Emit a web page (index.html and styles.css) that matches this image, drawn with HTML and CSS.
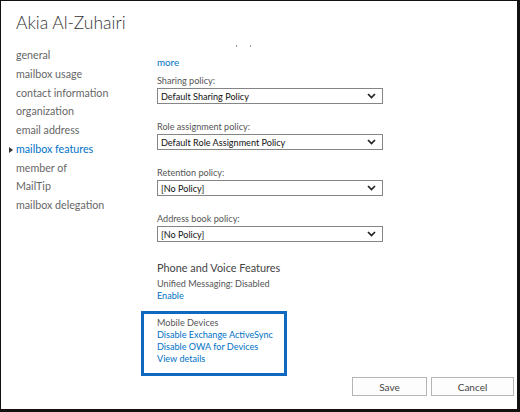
FILE: index.html
```html
<!DOCTYPE html>
<html>
<head>
<meta charset="utf-8">
<link rel="stylesheet" href="styles.css">
</head>
<body>
<div class="dialog">
  <div class="title">Akia Al-Zuhairi</div>
  <div class="main">
    <ul class="nav">
      <li>general</li>
      <li>mailbox usage</li>
      <li>contact information</li>
      <li>organization</li>
      <li>email address</li>
      <li class="active">mailbox features</li>
      <li>member of</li>
      <li>MailTip</li>
      <li>mailbox delegation</li>
    </ul>
    <div class="content">
      <div class="clipped"><span class="dot"></span><span class="dot"></span></div>
      <a class="link more">more</a>
      <div class="field">
        <div class="label">Sharing policy:</div>
        <div class="select"><span>Default Sharing Policy</span><svg class="chev" width="9" height="6" viewBox="0 0 9 6"><path d="M1 1 L4.5 4.5 L8 1" fill="none" stroke="#222" stroke-width="1.7"/></svg></div>
      </div>
      <div class="field">
        <div class="label">Role assignment policy:</div>
        <div class="select"><span>Default Role Assignment Policy</span><svg class="chev" width="9" height="6" viewBox="0 0 9 6"><path d="M1 1 L4.5 4.5 L8 1" fill="none" stroke="#222" stroke-width="1.7"/></svg></div>
      </div>
      <div class="field">
        <div class="label">Retention policy:</div>
        <div class="select"><span>[No Policy]</span><svg class="chev" width="9" height="6" viewBox="0 0 9 6"><path d="M1 1 L4.5 4.5 L8 1" fill="none" stroke="#222" stroke-width="1.7"/></svg></div>
      </div>
      <div class="field">
        <div class="label">Address book policy:</div>
        <div class="select"><span>[No Policy]</span><svg class="chev" width="9" height="6" viewBox="0 0 9 6"><path d="M1 1 L4.5 4.5 L8 1" fill="none" stroke="#222" stroke-width="1.7"/></svg></div>
      </div>
      <div class="section-title">Phone and Voice Features</div>
      <div class="text">Unified Messaging: Disabled</div>
      <a class="link">Enable</a>
      <div class="highlight">
        <div class="text">Mobile Devices</div>
        <a class="link">Disable Exchange ActiveSync</a>
        <a class="link">Disable OWA for Devices</a>
        <a class="link">View details</a>
      </div>
    </div>
  </div>
  <div class="footer">
    <button class="btn save">Save</button>
    <button class="btn cancel">Cancel</button>
  </div>
</div>
</body>
</html>
```
FILE: styles.css
```css
* { box-sizing: border-box; }
html, body { margin: 0; padding: 0; background: #fff; }
body {
  font-family: "Lato", "Open Sans", sans-serif;
  width: 520px;
  height: 412px;
  overflow: hidden;
}
.dialog {
  width: 520px;
  height: 412px;
  border-top: 1px solid #111;
  border-left: 1px solid #111;
  border-right: 3px solid #111;
  border-bottom: 3px solid #111;
  display: flex;
  flex-direction: column;
  background: #fff;
}
.title {
  flex-shrink: 0;
  font-size: 17.5px;
  font-weight: 300;
  color: #333;
  padding: 11px 0 0 15px;
  height: 44px;
  line-height: 22px;
}
.main {
  display: flex;
  flex: 1;
  min-height: 0;
  overflow: hidden;
}
.nav {
  list-style: none;
  margin: 0;
  padding: 1px 0 0 15px;
  width: 140px;
  font-size: 10.7px;
  color: #666;
}
.nav li {
  height: 18.75px;
  line-height: 18.75px;
  position: relative;
  white-space: nowrap;
}
.nav li.active {
  color: #0072c6;
}
.nav li.active::before {
  content: "";
  position: absolute;
  left: -7px;
  top: 7px;
  border-left: 4px solid #333;
  border-top: 3px solid transparent;
  border-bottom: 3px solid transparent;
}
.content {
  flex: 1;
  padding-left: 16px;
  font-size: 9.1px;
  color: #444;
  display: flex;
  flex-direction: column;
  align-items: flex-start;
}
.clipped {
  height: 11px;
  display: flex;
  gap: 13px;
  padding-left: 79px;
  align-items: flex-start;
}
.dot {
  width: 1px;
  height: 2px;
  background: #999;
}
.link {
  color: #0072c6;
  line-height: 12px;
  display: block;
  white-space: nowrap;
}
.more { font-size: 9.8px; }
.field {
  margin-bottom: 16px;
}
.more + .field { margin-top: 6px; }
.label {
  line-height: 13px;
  height: 13px;
  color: #555;
}
.select {
  width: 226px;
  height: 16px;
  border: 1px solid #858585;
  margin-top: 1px;
  display: flex;
  align-items: center;
  justify-content: space-between;
  padding: 0 6px 0 3px;
  color: #111;
}
.chev { display: block; }
.section-title {
  font-size: 10.9px;
  color: #444;
  margin-top: 2px;
  line-height: 16px;
}
.text {
  line-height: 12px;
  color: #555;
  white-space: nowrap;
}
.section-title + .text { margin-top: 2px; }
.highlight {
  margin-left: -16px;
  margin-top: 9px;
  width: 146px;
  height: 65px;
  border: 3px solid #1168c0;
  padding: 3px 0 0 13px;
  flex-shrink: 0;
}
.footer {
  flex-shrink: 0;
  display: flex;
  justify-content: flex-end;
  gap: 4px;
  padding: 0 3px 13px 0;
}
.btn {
  font-family: "Lato", "Open Sans", sans-serif;
  font-size: 10px;
  color: #444;
  background: #fdfdfd;
  border: 1px solid #b5b5b5;
  height: 19px;
  padding: 0;
  line-height: 16px;
}
.save { width: 75px; }
.cancel { width: 83px; }
```
